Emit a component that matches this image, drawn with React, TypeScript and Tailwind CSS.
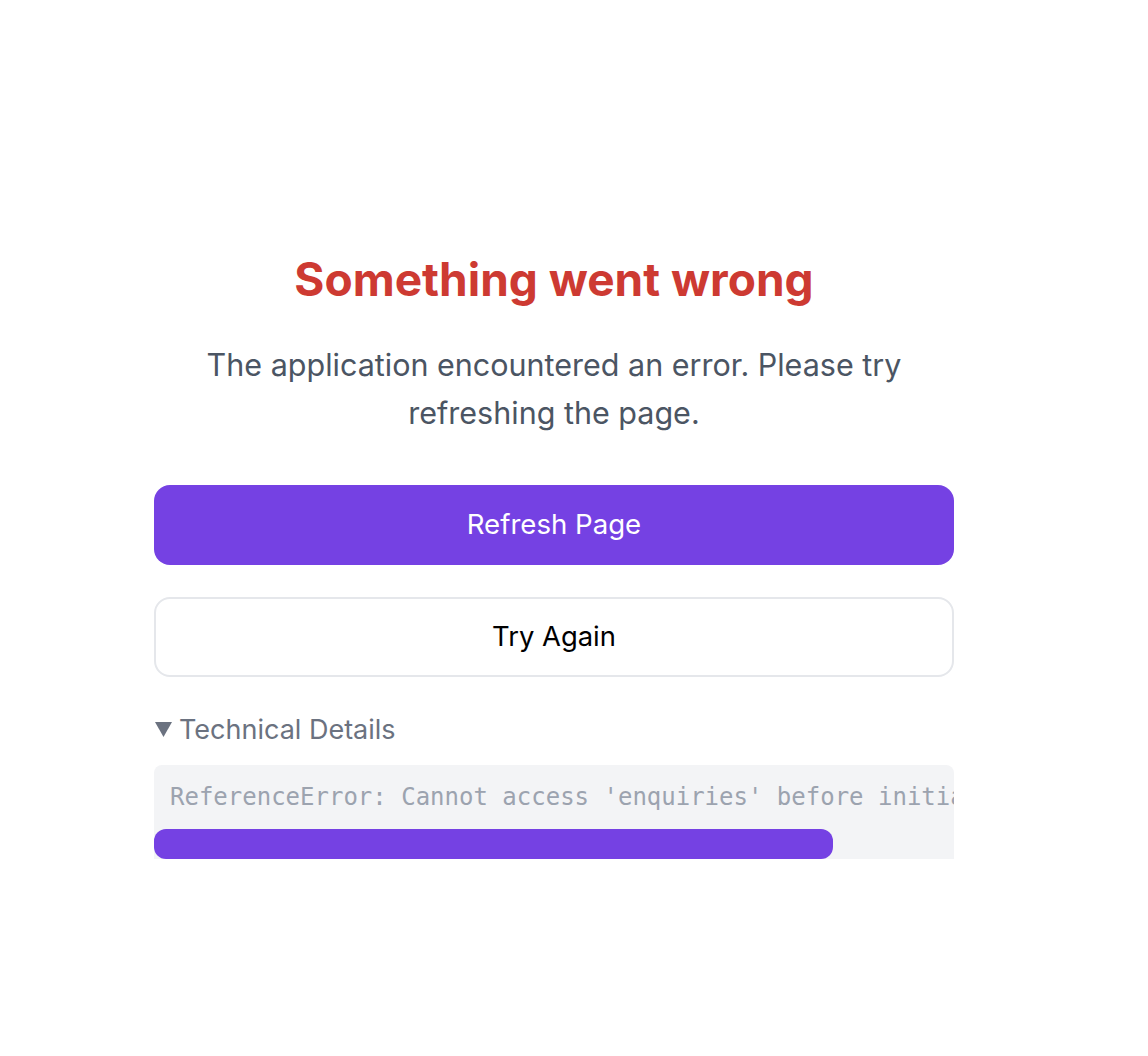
import React from 'react';

const ERROR_MESSAGE = "ReferenceError: Cannot access 'enquiries' before initialization";

const App: React.FC = () => {
    const handleRefresh = () => window.location.reload();
    const handleRetry = () => {};

    return (
        <div className="min-h-screen bg-white font-['Inter',sans-serif]">
            <div className="ml-[154px] w-[800px] pt-[251px]">
                <h1 className="text-center text-[46px] leading-[56px] font-bold text-[#cd3a32]">
                    Something went wrong
                </h1>
                <p className="mt-[34px] text-center text-[30.5px] leading-[48px] text-[#4b5563]">
                    The application encountered an error. Please try refreshing the page.
                </p>

                <button
                    type="button"
                    onClick={handleRefresh}
                    className="mt-[48px] flex h-[80px] w-full items-center justify-center rounded-[16px] bg-[#7541e3] text-[27.6px] text-white"
                >
                    Refresh Page
                </button>
                <button
                    type="button"
                    onClick={handleRetry}
                    className="mt-[32px] flex h-[80px] w-full items-center justify-center rounded-[16px] border-2 border-[#e5e7eb] bg-white text-[27.4px] text-black"
                >
                    Try Again
                </button>

                <details open className="mt-[33px]">
                    <summary className="flex cursor-pointer list-none items-center gap-[7px] text-[27px] leading-[40px] text-[#6b7280] [&::-webkit-details-marker]:hidden">
                        <svg width="17" height="15" viewBox="0 0 17 15" className="ml-px mt-[-2px] shrink-0">
                            <polygon points="0,0 17,0 8.5,15" fill="#6b7280" />
                        </svg>
                        Technical Details
                    </summary>
                    <div className="mt-[15px] rounded-t-[8px] bg-[#f3f4f6]">
                        <pre className="overflow-hidden p-[16px] font-['DejaVu_Sans_Mono',monospace] text-[24px] leading-[32px] text-[#9ca3af]">
                            {ERROR_MESSAGE}
                        </pre>
                        {/* scrollbar */}
                        <div className="h-[30px]">
                            <div className="h-full w-[679px] rounded-[12px] bg-[#7541e3]" />
                        </div>
                    </div>
                </details>
            </div>
        </div>
    );
};

export default App;
